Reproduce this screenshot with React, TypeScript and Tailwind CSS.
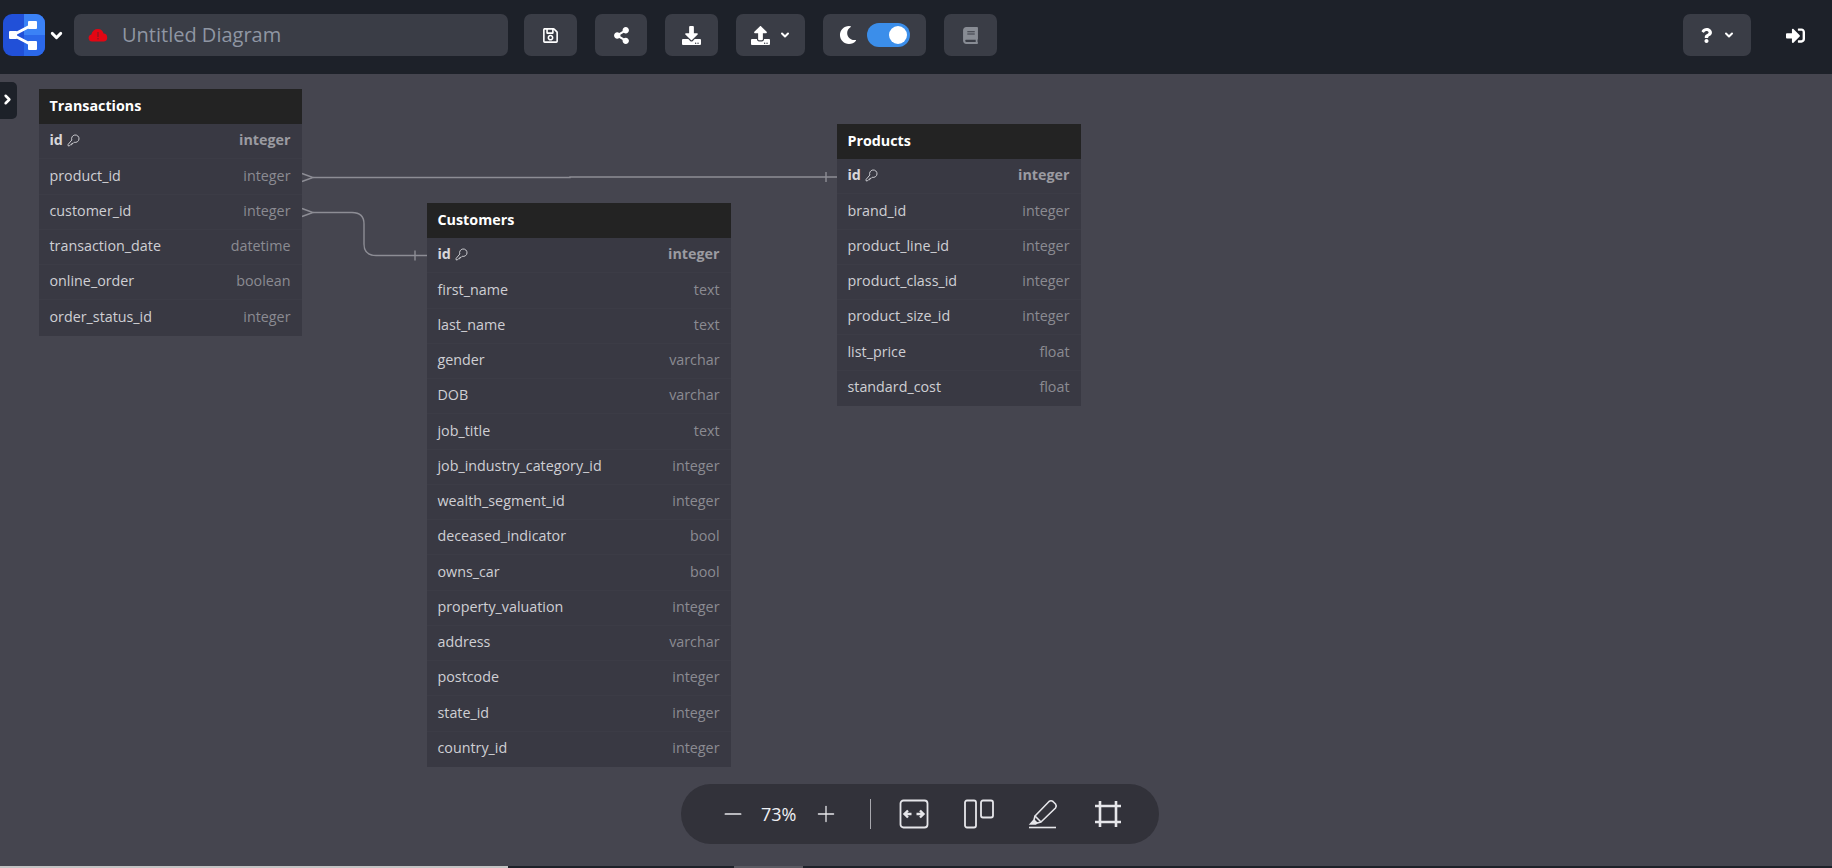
import { ChevronDown, ChevronRight, Minus, Plus } from "lucide-react";
import { FaBook, FaDownload, FaMoon, FaQuestion, FaRegSave, FaShareAlt, FaSignInAlt, FaUpload } from "react-icons/fa";

type Column = [string, string];

const tables: { name: string; place: string; columns: Column[] }[] = [
  {
    name: "Transactions",
    place: "left-[39px] top-[15px] w-[263px]",
    columns: [
      ["id", "integer"],
      ["product_id", "integer"],
      ["customer_id", "integer"],
      ["transaction_date", "datetime"],
      ["online_order", "boolean"],
      ["order_status_id", "integer"],
    ],
  },
  {
    name: "Customers",
    place: "left-[427px] top-[129px] w-[304px]",
    columns: [
      ["id", "integer"],
      ["first_name", "text"],
      ["last_name", "text"],
      ["gender", "varchar"],
      ["DOB", "varchar"],
      ["job_title", "text"],
      ["job_industry_category_id", "integer"],
      ["wealth_segment_id", "integer"],
      ["deceased_indicator", "bool"],
      ["owns_car", "bool"],
      ["property_valuation", "integer"],
      ["address", "varchar"],
      ["postcode", "integer"],
      ["state_id", "integer"],
      ["country_id", "integer"],
    ],
  },
  {
    name: "Products",
    place: "left-[837px] top-[50px] w-[244px]",
    columns: [
      ["id", "integer"],
      ["brand_id", "integer"],
      ["product_line_id", "integer"],
      ["product_class_id", "integer"],
      ["product_size_id", "integer"],
      ["list_price", "float"],
      ["standard_cost", "float"],
    ],
  },
];

function Logo() {
  return (
    <svg viewBox="0 0 42 42" className="h-[42px] w-[42px] rounded-[9px]">
      <rect width="42" height="42" fill="#2150d8" />
      <rect x="21" width="21" height="21" fill="#3b82f6" />
      <rect x="21" y="21" width="21" height="21" fill="#2b68ea" />
      <path d="M10 21 L29 11 M10 21 L29 31" stroke="#fff" strokeWidth="3" fill="none" />
      <rect x="6" y="17" width="8" height="8" rx="1" fill="#fff" />
      <rect x="25" y="7" width="9" height="8" rx="1" fill="#fff" />
      <rect x="25" y="27" width="9" height="9" rx="1" fill="#fff" />
    </svg>
  );
}

function CloudAlert() {
  return (
    <svg viewBox="0 0 20 14" className="h-[14px] w-[20px]">
      <path
        d="M4 13.5a3.6 3.6 0 0 1-.6-7.1A6.4 6.4 0 0 1 10 1a6 6 0 0 1 5.6 4.6A4 4 0 0 1 16 13.5Z"
        fill="#e30613"
      />
      <rect x="9.3" y="4" width="1.4" height="5" fill="#8a1a24" />
      <rect x="9.3" y="10" width="1.4" height="1.4" fill="#8a1a24" />
    </svg>
  );
}

function KeyIcon() {
  return (
    <svg viewBox="0 0 14 14" className="h-[13px] w-[13px]" fill="none" stroke="currentColor" strokeWidth="1">
      <path d="M5.2 6.5a4 4 0 1 1 2.6 2.4L6.6 10.1H5.2V11.5H3.8L2.6 12.8H1.2V11.2Z" />
    </svg>
  );
}

function ToolButton({ className, children }: { className: string; children: React.ReactNode }) {
  return (
    <div className={`flex h-[42px] items-center justify-center rounded-[7px] bg-[#3a3d46] text-white ${className}`}>
      {children}
    </div>
  );
}

function Header() {
  return (
    <header className="flex h-[74px] shrink-0 items-center bg-[#1d2129] pb-[4px] pl-[3px] pr-[27px]">
      <Logo />
      <ChevronDown size={17} strokeWidth={4} className="ml-[3px] text-white" />
      <div className="ml-[9px] flex h-[42px] w-[434px] items-center rounded-[7px] bg-[#3a3d46] pl-[14px]">
        <CloudAlert />
        <span className="ml-[14px] text-[20px] text-[#8f96a3]">Untitled Diagram</span>
      </div>
      <ToolButton className="ml-[16px] w-[53px]">
        <FaRegSave size={17} />
      </ToolButton>
      <ToolButton className="ml-[18px] w-[52px]">
        <FaShareAlt size={17} />
      </ToolButton>
      <ToolButton className="ml-[18px] w-[53px]">
        <FaDownload size={19} />
      </ToolButton>
      <ToolButton className="ml-[18px] w-[69px] gap-[9px]">
        <FaUpload size={19} />
        <ChevronDown size={12} strokeWidth={4} />
      </ToolButton>
      <ToolButton className="ml-[18px] w-[103px] gap-[10px]">
        <FaMoon size={18} />
        <div className="flex h-[24px] w-[43px] items-center justify-end rounded-full bg-[#3b8eea] pr-[3px]">
          <div className="h-[18px] w-[18px] rounded-full bg-white" />
        </div>
      </ToolButton>
      <ToolButton className="ml-[18px] w-[53px] bg-[#2f333c] !text-[#888c94]">
        <FaBook size={17} />
      </ToolButton>
      <ToolButton className="ml-auto w-[68px] gap-[9px]">
        <FaQuestion size={15} />
        <ChevronDown size={12} strokeWidth={4} />
      </ToolButton>
      <div className="ml-[35px] text-white">
        <FaSignInAlt size={19} />
      </div>
    </header>
  );
}

function Connections() {
  return (
    <svg className="absolute inset-0 h-full w-full" fill="none" stroke="#8d8d95" strokeWidth="1.4">
      <path d="M302 99.5 L313 103.5 L302 107.5" />
      <path d="M313 103.5 H570 V103 H837" />
      <path d="M826 98 V108" />
      <path d="M302 134.5 L313 138.5 L302 142.5" />
      <path d="M313 138.5 H352 Q364 138.5 364 150 V170 Q364 181.5 376 181.5 H427" />
      <path d="M415 176.5 V186.5" />
    </svg>
  );
}

function DbTable({ name, place, columns }: { name: string; place: string; columns: Column[] }) {
  return (
    <div className={`absolute ${place} bg-[#393943] text-[14.3px]`}>
      <div className="flex h-[35px] items-center bg-[#232323] pb-[2px] pl-[10.5px] pr-[11px] font-bold text-white">{name}</div>
      {columns.map(([col, type]) => {
        const pk = col === "id";
        return (
          <div
            key={col}
            className="flex h-[35.25px] items-center justify-between border-b border-[#3c3c46] pb-[2px] pl-[10.5px] pr-[11.5px] last:border-b-0"
          >
            <span className={`flex items-center gap-[4px] ${pk ? "font-bold text-[#d6d6da]" : "text-[#cfcfd4]"}`}>
              {col}
              {pk && <KeyIcon />}
            </span>
            <span className={pk ? "font-bold text-[#9b9ba1]" : "text-[#8b8b92]"}>{type}</span>
          </div>
        );
      })}
    </div>
  );
}

function ZoomBar() {
  return (
    <div className="absolute left-[681px] top-[710px] flex h-[60px] w-[478px] items-center rounded-full bg-[#32323a] text-[#e6e6ea]">
      <Minus size={26} strokeWidth={1.6} className="ml-[39px]" />
      <span className="ml-[15px] w-[38px] text-[18px] text-[#eef0f4]">73%</span>
      <Plus size={26} strokeWidth={1.2} className="ml-[14px]" />
      <div className="ml-[31px] h-[30px] w-px bg-[#a8a8ae]" />
      <svg viewBox="0 0 30 30" className="ml-[28px] h-[30px] w-[30px]" fill="none" stroke="currentColor" strokeWidth="1.8">
        <rect x="1.5" y="1.5" width="27" height="27" rx="3" />
        <path d="M5.5 15h7M9 11.5l-3.5 3.5 3.5 3.5M24.5 15h-7M21 11.5l3.5 3.5-3.5 3.5" strokeWidth="2.4" />
      </svg>
      <svg viewBox="0 0 30 30" className="ml-[35px] h-[30px] w-[30px]" fill="none" stroke="currentColor" strokeWidth="1.8">
        <rect x="1" y="1.5" width="11" height="27" rx="2" />
        <rect x="17" y="1.5" width="12" height="17" rx="2" />
      </svg>
      <svg viewBox="0 0 30 30" className="ml-[34px] h-[30px] w-[30px]" fill="none" stroke="currentColor" strokeWidth="1.6">
        <path d="M7 17 L21 2.5 Q23 1 25 2.5 L27.5 5 Q29 7 27.5 9 L13 23 Z" />
        <path d="M7 17 L6 21 L9 24 L13 23" />
        <path d="M6 21 L2.5 25 L7.5 25 L9 24" fill="currentColor" />
        <path d="M1 28.5 H28" />
      </svg>
      <svg viewBox="0 0 30 30" className="ml-[35px] h-[30px] w-[30px]" fill="none" stroke="currentColor" strokeWidth="2.6">
        <path d="M7 2v26M23 2v26M2 7h26M2 23h26" />
      </svg>
    </div>
  );
}

export default function App() {
  return (
    <div className="flex h-screen w-full flex-col overflow-hidden bg-[#45454f] font-['Open_Sans',sans-serif]">
      <Header />
      <main className="relative flex-1">
        <Connections />
        <div className="absolute left-0 top-[8px] flex h-[37px] w-[17px] items-center justify-center rounded-r-[5px] bg-[#1d2129] text-white">
          <ChevronRight size={15} strokeWidth={4} className="-mt-[2px] -ml-[3px]" />
        </div>
        {tables.map((t) => (
          <DbTable key={t.name} {...t} />
        ))}
        <ZoomBar />
      </main>
      <div className="flex h-[2px] shrink-0 bg-[#1d2129]">
        <div className="w-[508px] bg-[#c4c4c4]" />
        <div className="ml-[226px] w-[69px] bg-[#5a5a62]" />
      </div>
    </div>
  );
}
